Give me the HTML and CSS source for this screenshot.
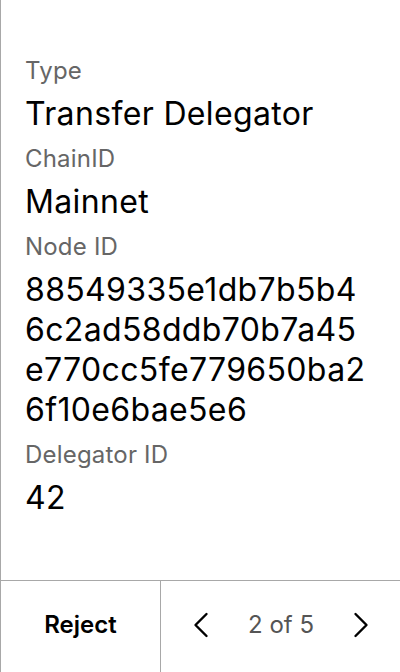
FILE: index.html
```html
<!DOCTYPE html>
<html>
<head>
<meta charset="utf-8">
<link rel="stylesheet" href="styles.css">
</head>
<body>
<div class="screen">
  <main class="details">
    <div class="field">
      <div class="label">Type</div>
      <div class="value">Transfer Delegator</div>
    </div>
    <div class="field">
      <div class="label">ChainID</div>
      <div class="value">Mainnet</div>
    </div>
    <div class="field">
      <div class="label">Node ID</div>
      <div class="value">88549335e1db7b5b4<br>6c2ad58ddb70b7a45<br>e770cc5fe779650ba2<br>6f10e6bae5e6</div>
    </div>
    <div class="field">
      <div class="label">Delegator ID</div>
      <div class="value">42</div>
    </div>
  </main>
  <footer class="bar">
    <button class="reject">Reject</button>
    <div class="pager">
      <span class="chev"><svg width="16" height="26" viewBox="0 0 16 26"><path d="M13.5 2 L2.5 13 L13.5 24" fill="none" stroke="#000" stroke-width="2.4" stroke-linecap="round" stroke-linejoin="round"/></svg></span>
      <span class="count">2 of 5</span>
      <span class="chev"><svg width="16" height="26" viewBox="0 0 16 26"><path d="M2.5 2 L13.5 13 L2.5 24" fill="none" stroke="#000" stroke-width="2.4" stroke-linecap="round" stroke-linejoin="round"/></svg></span>
    </div>
  </footer>
</div>
</body>
</html>
```
FILE: styles.css
```css
* { box-sizing: border-box; }
html, body { margin: 0; padding: 0; background: #fff; }
body { font-family: Inter, "Noto Sans", sans-serif; color: #000; }
.screen {
  width: 400px;
  height: 672px;
  border-left: 1px solid #a8a8a8;
  display: flex;
  flex-direction: column;
}
.details {
  flex: 1;
  padding: 55px 24px 0 24px;
  display: flex;
  flex-direction: column;
  gap: 9px;
}
.field { display: flex; flex-direction: column; gap: 7px; }
.label { font-size: 24px; line-height: 32px; color: #666; letter-spacing: 0.2px; }
.value { font-size: 32px; line-height: 40px; color: #000; letter-spacing: 0.35px; }
.bar {
  height: 92px;
  border-top: 1px solid #a8a8a8;
  display: flex;
}
.reject {
  width: 160px;
  border: 0;
  border-right: 1px solid #a8a8a8;
  background: #fff;
  font-family: Inter, sans-serif;
  font-size: 24px;
  font-weight: 600;
  color: #000;
  padding: 0 0 4px 0;
}
.pager {
  flex: 1;
  display: flex;
  align-items: center;
  justify-content: space-between;
  padding: 0 31px 4px 32px;
}
.chev { display: flex; }
.count { font-size: 24px; color: #555; }
```
